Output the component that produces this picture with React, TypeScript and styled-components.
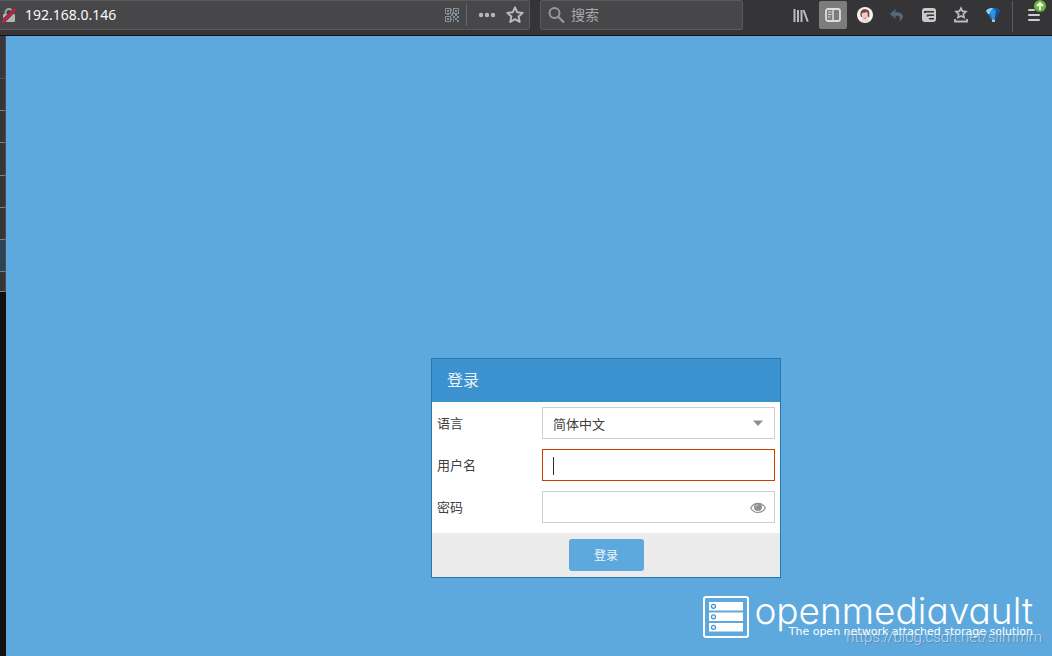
import React from "react";
import styled, { createGlobalStyle } from "styled-components";

const sans = `"Noto Sans", "Open Sans", "Noto Sans CJK SC", sans-serif`;

const GlobalStyle = createGlobalStyle`
  *, *::before, *::after { box-sizing: border-box; }
  body { margin: 0; background: #5da9de; font-family: ${sans}; }
  button, input, select { font-family: inherit; }
`;

const Page = styled.div`
  display: flex;
  flex-direction: column;
  min-height: 100vh;
`;

const Toolbar = styled.header`
  display: flex;
  height: 36px;
  background: #353537;
  border-bottom: 1px solid #111113;
`;

const FieldBox = styled.div`
  display: flex;
  align-items: center;
  height: 30px;
  background: #474749;
  border: 1px solid #5a5a5c;
`;

const AddressBox = styled(FieldBox)`
  flex: 1;
  min-width: 0;
  border-left: 0;
  border-radius: 0 2px 2px 0;
`;

const SearchBox = styled(FieldBox)`
  width: 203px;
  margin-left: 10px;
  border-radius: 2px;
  padding-left: 7px;
`;

const BarInput = styled.input`
  flex: 1;
  min-width: 0;
  height: 28px;
  padding: 0 5px 2px;
  border: 0;
  outline: 0;
  background: transparent;
  color: #f9f9fa;
  font-size: 14px;
  &::placeholder { color: #a9a9ab; opacity: 1; }
`;

const BarButton = styled.button<{ $active?: boolean }>`
  display: flex;
  align-items: center;
  justify-content: center;
  flex: none;
  width: 28px;
  height: 28px;
  padding: 0;
  border: 0;
  border-radius: 2px;
  background: ${(p) => (p.$active ? "#7c7c7c" : "transparent")};
`;

const Divider = styled.span`
  flex: none;
  width: 1px;
  height: 22px;
  margin: 0 6px 0 7px;
  background: #616670;
`;

const Tools = styled.nav`
  display: flex;
  gap: 4px;
  margin-left: 44px;
  padding-top: 1px;
`;

const MenuArea = styled.div`
  position: relative;
  width: 40px;
  height: 31px;
  margin-left: 1px;
  padding-left: 7px;
  border-left: 1px solid #5c5c60;
`;

const UpdateBadge = styled.svg`
  position: absolute;
  top: -2px;
  right: 6px;
`;

const Main = styled.div`
  display: flex;
  flex: 1;
`;

const Sidebar = styled.aside`
  flex: none;
  width: 6px;
  background: #111111;
`;

const SidebarRow = styled.div<{ $height: number; $color?: string; $line?: string }>`
  height: ${(p) => p.$height}px;
  background: ${(p) => p.$color ?? "#363637"};
  border-bottom: 1px solid ${(p) => p.$line ?? "#7f7f80"};
  border-right: 1px solid #4e4e52;
`;

const Stage = styled.main`
  display: flex;
  flex: 1;
  flex-direction: column;
  justify-content: space-between;
  position: relative;
  min-width: 0;
  padding-top: 322px;
  background: #5da9de;
`;

const LoginPanel = styled.form`
  width: 350px;
  margin: 0 auto;
  border: 1px solid #2479b5;
  background: #ffffff;
`;

const PanelSlot = styled.div`
  display: flex;
  padding-left: 154px;
`;

const PanelTitle = styled.h1`
  margin: 0;
  padding: 0 15px;
  background: #3c92ce;
  color: #e9f2f9;
  font-size: 16px;
  font-weight: 400;
  line-height: 43px;
`;

const Fields = styled.div`
  display: grid;
  row-gap: 10px;
  padding: 5px 5px 10px;
`;

const FieldRow = styled.div`
  display: grid;
  grid-template-columns: 105px 1fr;
  align-items: center;
`;

const Label = styled.label`
  padding-bottom: 2px;
  color: #404040;
  font-size: 13px;
`;

const Control = styled.div<{ $invalid?: boolean }>`
  display: flex;
  align-items: center;
  position: relative;
  height: 32px;
  border: 1px solid ${(p) => (p.$invalid ? "#cc3e00" : "#cecece")};
`;

const TextInput = styled.input`
  width: 100%;
  height: 30px;
  padding: 0 10px;
  border: 0;
  outline: 0;
  background: transparent;
  color: #404040;
  font-size: 13px;
  caret-color: transparent;
`;

const Select = styled.select`
  width: 100%;
  height: 30px;
  padding: 1px 10px 0;
  border: 0;
  outline: 0;
  appearance: none;
  background: transparent;
  color: #404040;
  font-size: 13px;
`;

const Arrow = styled.svg`
  position: absolute;
  right: 11px;
  pointer-events: none;
`;

const Caret = styled.span`
  position: absolute;
  left: 10px;
  width: 1px;
  height: 18px;
  margin-top: 2px;
  background: #303030;
`;

const EyeButton = styled.button`
  display: flex;
  flex: none;
  padding: 2px 8px 0;
  border: 0;
  background: transparent;
`;

const PanelFooter = styled.div`
  display: flex;
  justify-content: center;
  padding: 6px;
  background: #ebebeb;
`;

const SubmitButton = styled.button`
  width: 75px;
  height: 32px;
  padding: 0;
  border: 0;
  border-radius: 3px;
  background: #5da9de;
  color: #eef6fc;
  font-size: 12px;
`;

const Brand = styled.footer`
  display: flex;
  align-items: flex-start;
  justify-content: flex-end;
  gap: 5px;
  padding: 0 19px 18px 0;
  color: #ffffff;
`;

const BrandText = styled.div`
  display: flex;
  flex-direction: column;
  align-items: flex-end;
`;

const BrandName = styled.span`
  font-family: Inter, "DejaVu Sans", sans-serif;
  font-feature-settings: "cv11";
  font-size: 37px;
  font-weight: 300;
  line-height: 30px;
`;

const Tagline = styled.span`
  font-family: "DejaVu Sans", sans-serif;
  font-size: 11px;
  line-height: 12px;
`;

const Watermark = styled.span`
  position: absolute;
  right: 10px;
  bottom: 10px;
  color: rgba(255, 255, 255, 0.6);
  font-family: Roboto, "Liberation Sans", sans-serif;
  font-size: 15px;
  font-weight: 300;
  line-height: 18px;
  text-shadow: 1px 1px 1px rgba(70, 100, 130, 0.5);
`;

const light = "#bcbcbd";
const star =
  "M8 1.200l2 4.400 4.900.5-3.700 3.200 1 4.900L8 11.700l-4.200 2.500 1-4.900L1.100 6.100l4.900-.5z";

const sidebarRows: { height: number; color?: string; line?: string }[] = [
  { height: 43, color: "#3a383e", line: "#4f4e53" },
  { height: 32 },
  { height: 32 },
  { height: 33 },
  { height: 32 },
  { height: 32 },
  { height: 32, color: "#2c4358" },
  { height: 20 },
];

const LockIcon = () => (
  <svg width="20" height="28" viewBox="0 0 20 28" aria-hidden="true">
    <path d="M5.500 14v-2.500a3.500 3.500 0 0 1 7 0V14" fill="none" stroke="#a4a4a5" strokeWidth="2" />
    <rect x="3" y="13" width="12" height="8" rx="1" fill="#b4b4b5" />
    <path d="M2 21.500L15.500 8" stroke="#474749" strokeWidth="4" />
    <path d="M2 21.500L15.500 8" stroke="#e8133f" strokeWidth="2" />
  </svg>
);

const QrIcon = () => (
  <svg width="14" height="14" viewBox="0 0 14 14" fill="#83909b" aria-hidden="true">
    <path
      fillRule="evenodd"
      d="M0 0h6v6H0zM1 1v4h4V1zM2 2h2v2H2zM8 0h6v6H8zM9 1v4h4V1zM10 2h2v2h-2zM0 8h6v6H0zM1 9v4h4V9zM2 10h2v2H2z"
    />
    <path d="M6 1h1v2H6zM7 4h1v2H7zM6 6h2v2H6zM2 6h2v1H2zM10 6h2v2h-2zM8 8h2v2H8zM12 8h2v2h-2zM10 10h2v2h-2zM8 11h1v3H8zM12 12h2v2h-2zM6 10h1v2H6z" />
  </svg>
);

const StarIcon = () => (
  <svg width="18" height="18" viewBox="0 0 16 16" aria-hidden="true">
    <path d={star} fill="none" stroke={light} strokeWidth="1.700" strokeLinejoin="round" />
  </svg>
);

const ServerMark = () => (
  <svg width="46" height="42" viewBox="0 0 46 42" aria-hidden="true">
    <rect x="1" y="1" width="44" height="40" rx="2" fill="none" stroke="#fff" strokeWidth="2" />
    {[6, 16.5, 27].map((y) => (
      <g key={y}>
        <rect x="6" y={y} width="34" height="8.500" fill="#fff" />
        <circle cx="10.500" cy={y + 4.3} r="2" fill="none" stroke="#4596d0" strokeWidth="1.300" />
      </g>
    ))}
  </svg>
);

export default function App() {
  return (
    <Page>
      <GlobalStyle />
      <Toolbar>
        <AddressBox>
          <LockIcon />
          <BarInput aria-label="Address" defaultValue="192.168.0.146" />
          <QrIcon />
          <Divider />
          <BarButton aria-label="Page actions">
            <svg width="18" height="6" viewBox="0 0 18 6" fill="#b7b7b8">
              <circle cx="3" cy="3" r="2.200" />
              <circle cx="9" cy="3" r="2.200" />
              <circle cx="15" cy="3" r="2.200" />
            </svg>
          </BarButton>
          <BarButton aria-label="Bookmark">
            <StarIcon />
          </BarButton>
        </AddressBox>
        <SearchBox>
          <svg width="18" height="18" viewBox="0 0 18 18" fill="none" stroke="#98989a" aria-hidden="true">
            <circle cx="6.500" cy="7" r="5" strokeWidth="2" />
            <path d="M10.500 11l5.500 5.500" strokeWidth="2.200" />
          </svg>
          <BarInput aria-label="搜索" placeholder="搜索" />
        </SearchBox>
        <Tools>
          <BarButton aria-label="Library">
            <svg width="16" height="16" viewBox="0 0 16 16" stroke={light}>
              <path d="M1.500 2v13M5 3v12M8.500 3v12" strokeWidth="2" />
              <path d="M10.500 3l4.300 11.700" strokeWidth="2" />
            </svg>
          </BarButton>
          <BarButton aria-label="Sidebars" $active>
            <svg width="16" height="14" viewBox="0 0 16 14" fill="none" stroke="#dddddd">
              <rect x="1" y="1" width="14" height="12" rx="2" strokeWidth="1.800" />
              <path d="M8 1v12" strokeWidth="1.500" />
              <path d="M3 4h3.500M3 6.500h3.500M3 9h2.500" strokeWidth="1" />
            </svg>
          </BarButton>
          <BarButton aria-label="Account">
            <svg width="16" height="16" viewBox="0 0 16 16">
              <circle cx="8" cy="8" r="8" fill="#f7f3f3" />
              <path d="M3.500 8C3 3.500 5.500 2 8.500 2.200c3.200.2 4.200 2.300 3.900 5.300l-.3 3-1.600-1-6.500.5z" fill="#6b4a48" />
              <ellipse cx="7.800" cy="7.800" rx="3" ry="3.400" fill="#f4c9bf" />
              <path d="M5 5.500c2 .8 4-.2 5-1.500l-1-1.200H6z" fill="#6b4a48" />
              <path d="M4 14c.5-3 1.800-3.500 3.800-3.500S12 11.500 12.500 14c-2.700 1.700-5.800 1.700-8.500 0z" fill="#e9dad9" />
              <path d="M6.300 10.500l1.500 1.500 1.500-2" fill="none" stroke="#d7736c" />
            </svg>
          </BarButton>
          <BarButton aria-label="Undo">
            <svg width="16" height="16" viewBox="0 0 16 16" fill="#566779">
              <path d="M6.500 2L1 7l5.500 4.800V8.800c3.800-.3 5.500 1 3.800 5.700C16.500 11 15 5 6.500 5.200z" />
            </svg>
          </BarButton>
          <BarButton aria-label="Notes">
            <svg width="16" height="16" viewBox="0 0 16 16">
              <rect x="1" y="1" width="14" height="14" rx="3" fill="#cacaca" />
              <path d="M3 4h10v1.500H3zM5.500 7.500H13V9H6.500zM7.500 11H13v1.500H8.500z" fill="#353537" />
              <path d="M3 5.500h2M5.500 9h2" stroke="#353537" />
            </svg>
          </BarButton>
          <BarButton aria-label="Bookmarks menu">
            <svg width="16" height="18" viewBox="0 0 16 18" fill="none" stroke={light}>
              <path
                d="M8 2.200l1.500 3 3.400.5-2.500 2.400.6 3.400L8 9.900l-3 1.600.6-3.400-2.500-2.400 3.400-.5z"
                strokeWidth="1.700"
              />
              <path d="M2 13v2.500h12V13" strokeWidth="1.800" />
            </svg>
          </BarButton>
          <BarButton aria-label="Balloon">
            <svg width="16" height="16" viewBox="0 0 16 16">
              <path d="M1 4C3 0 13 0 15 4L9.800 13H6.800z" fill="#1674cb" />
              <path d="M1 4C2.500 1.300 6 .8 8 1.200L5 6.500 3 7z" fill="#8fd0f5" />
              <path d="M5 5c1-3.500 5-3.500 6 0l-2 7.500H7.500z" fill="#2f95e2" />
              <path d="M10.500 1.800L15 4l-5.500 8.500L11 5z" fill="#0c4d9f" />
              <rect x="7" y="12.500" width="3" height="2.500" fill="#b5c3ce" />
            </svg>
          </BarButton>
          <MenuArea>
            <BarButton aria-label="Open menu">
              <svg width="14" height="14" viewBox="0 0 14 14" stroke="#cfcfd0" strokeWidth="2" strokeLinecap="round">
                <path d="M2 2h5M2 7h10M2 12h10" />
              </svg>
            </BarButton>
            <UpdateBadge width="12" height="13" viewBox="0 0 12 13" aria-hidden="true">
              <circle cx="6" cy="7" r="6" fill="#67b73b" />
              <path d="M6 11V4M3 7l3-3 3 3" fill="none" stroke="#fff" strokeWidth="1.800" />
            </UpdateBadge>
          </MenuArea>
        </Tools>
      </Toolbar>
      <Main>
        <Sidebar>
          {sidebarRows.map((row, i) => (
            <SidebarRow key={i} $height={row.height} $color={row.color} $line={row.line} />
          ))}
        </Sidebar>
        <Stage>
          <PanelSlot>
            <LoginPanel onSubmit={(e) => e.preventDefault()}>
              <PanelTitle>登录</PanelTitle>
              <Fields>
                <FieldRow>
                  <Label htmlFor="language">语言</Label>
                  <Control>
                    <Select id="language" defaultValue="zh">
                      <option value="zh">简体中文</option>
                    </Select>
                    <Arrow width="10" height="6" viewBox="0 0 10 6" aria-hidden="true">
                      <path d="M0 .5h10L5 6z" fill="#8f8f8f" />
                    </Arrow>
                  </Control>
                </FieldRow>
                <FieldRow>
                  <Label htmlFor="username">用户名</Label>
                  <Control $invalid>
                    <TextInput id="username" type="text" />
                    <Caret />
                  </Control>
                </FieldRow>
                <FieldRow>
                  <Label htmlFor="password">密码</Label>
                  <Control>
                    <TextInput id="password" type="password" />
                    <EyeButton type="button" aria-label="Show password">
                      <svg width="16" height="12" viewBox="0 0 16 12">
                        <path
                          d="M.7 6C4-.2 12-.2 15.300 6 12 12 4 12 .7 6z"
                          fill="none"
                          stroke="#909090"
                          strokeWidth="1.200"
                        />
                        <circle cx="8" cy="5" r="4" fill="#909090" />
                        <path d="M5.700 5A2.300 2.300 0 0 1 8 2.700" fill="none" stroke="#e4e4e4" strokeWidth=".8" />
                      </svg>
                    </EyeButton>
                  </Control>
                </FieldRow>
              </Fields>
              <PanelFooter>
                <SubmitButton type="submit">登录</SubmitButton>
              </PanelFooter>
            </LoginPanel>
          </PanelSlot>
          <Brand>
            <ServerMark />
            <BrandText>
              <BrandName>openmediavault</BrandName>
              <Tagline>The open network attached storage solution</Tagline>
            </BrandText>
          </Brand>
          <Watermark>https://blog.csdn.net/slimmm</Watermark>
        </Stage>
      </Main>
    </Page>
  );
}
